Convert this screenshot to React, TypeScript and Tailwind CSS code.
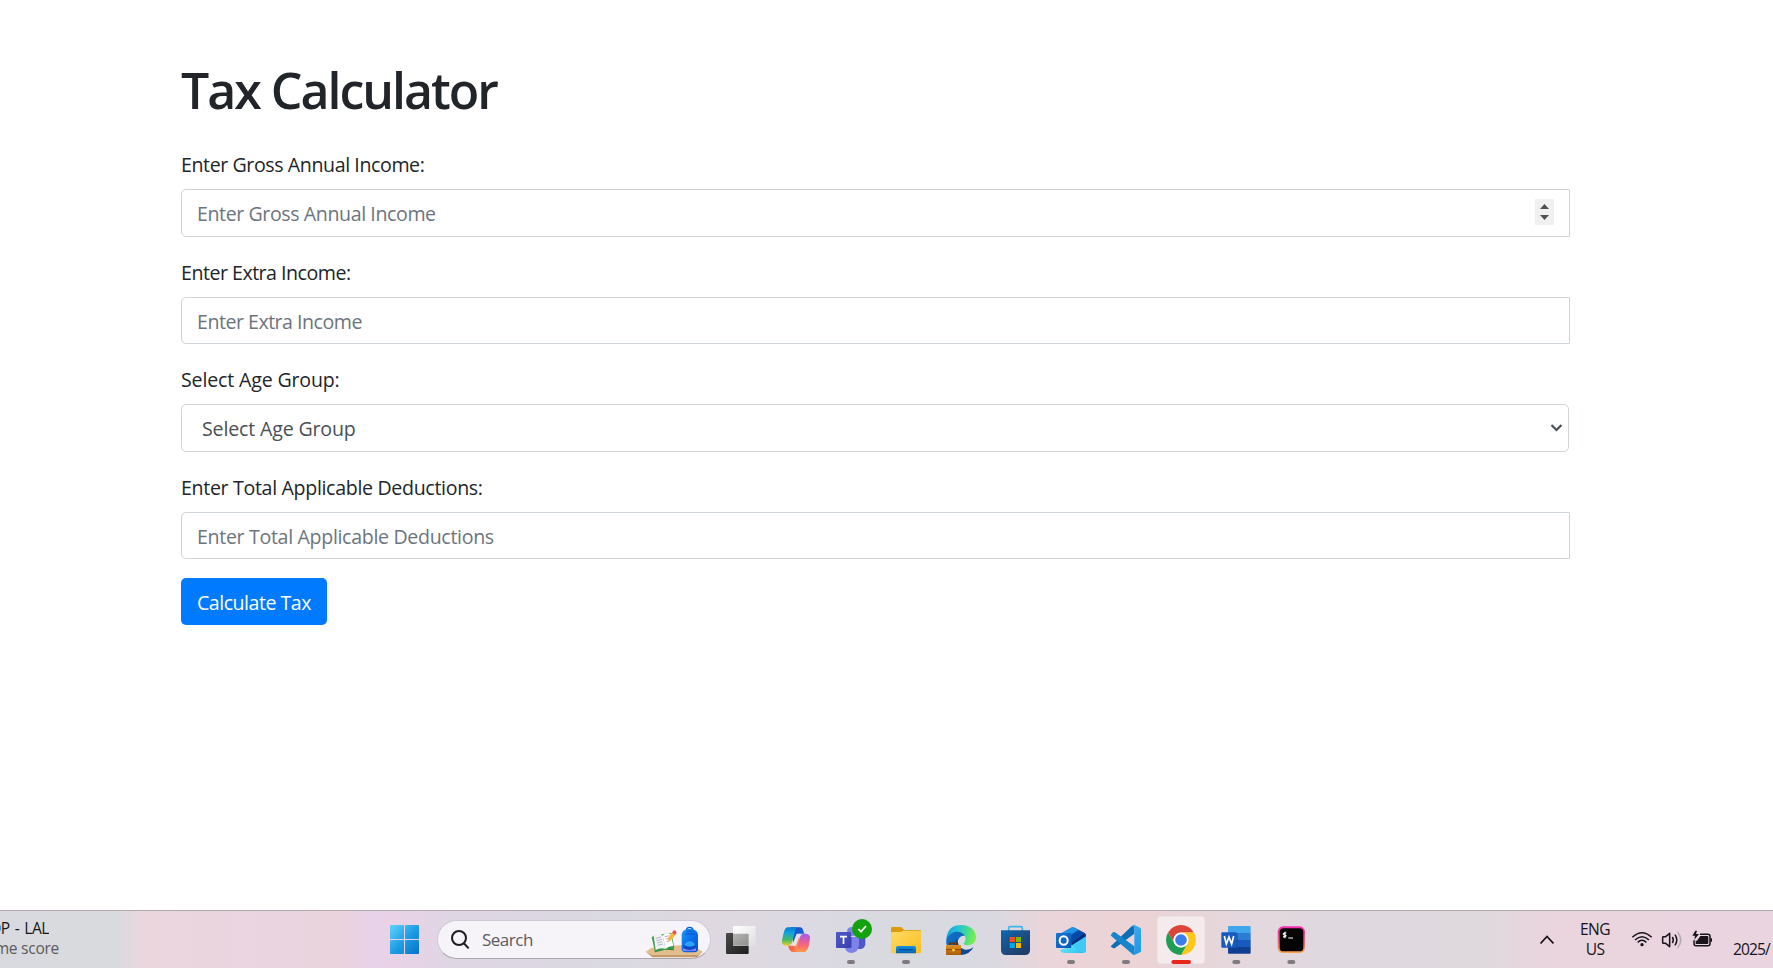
import React from "react";

type TextProps = { children: React.ReactNode; className?: string };

function Label({ children, className = "" }: TextProps) {
  return (
    <label className={`block h-[30px] w-max text-[19.6px] leading-[30px] text-[#212529] ${className}`}>
      {children}
    </label>
  );
}

type FieldProps = {
  label: string;
  placeholder: string;
  labelClass: string;
  inputClass: string;
  spinner?: boolean;
};

function NumberField({ label, placeholder, labelClass, inputClass, spinner }: FieldProps) {
  return (
    <div>
      <Label className={labelClass}>{label}</Label>
      <div className="mt-[9px] flex h-[47.5px] w-[1389px] items-center rounded-l-[5px] border border-[#ced4da] bg-white pl-[15px] pr-[15px]">
        <input
          type="text"
          placeholder={placeholder}
          className={`h-full min-w-0 flex-1 bg-transparent pt-[2px] text-[19.6px] text-[#495057] outline-none placeholder:text-[#6c757d] ${inputClass}`}
        />
        {spinner && (
          <svg className="mb-[1px]" width="19" height="26" viewBox="0 0 19 26">
            <rect width="19" height="26" fill="#f0f0f0" />
            <path d="M5 10 9.5 5 14 10ZM5 16h9l-4.500 5Z" fill="#505050" />
          </svg>
        )}
      </div>
    </div>
  );
}

function Cell({ box, children }: { box: string; children: React.ReactNode }) {
  return (
    <svg className="shrink-0" width="55" height="57" viewBox={box}>
      {children}
    </svg>
  );
}

function Grad({ id, stops, x2 = 1, y2 = 1 }: { id: string; stops: string[]; x2?: number; y2?: number }) {
  return (
    <linearGradient id={id} x1="0" y1="0" x2={x2} y2={y2}>
      {stops.map((c, i) => (
        <stop key={i} offset={i / (stops.length - 1)} stopColor={c} />
      ))}
    </linearGradient>
  );
}

function StartIcon() {
  return (
    <svg className="shrink-0" width="29" height="29" viewBox="0 0 87 87">
      <defs>
        <linearGradient id="win" gradientUnits="userSpaceOnUse" x1="0" y1="0" x2="87" y2="87">
          <stop offset="0" stopColor="#5fd3fb" />
          <stop offset=".5" stopColor="#1f9fe4" />
          <stop offset="1" stopColor="#0672cc" />
        </linearGradient>
      </defs>
      <g fill="url(#win)">
        <rect width="42" height="42" rx="2" />
        <rect x="45" width="42" height="42" rx="2" />
        <rect y="45" width="42" height="42" rx="2" />
        <rect x="45" y="45" width="42" height="42" rx="2" />
      </g>
    </svg>
  );
}

function SearchArt() {
  return (
    <svg className="shrink-0" width="58" height="36" viewBox="826 65 174 108">
      <defs>
        <Grad id="bag" stops={["#1b9bf5", "#0a6fee", "#0653c8"]} />
      </defs>
      <path d="M828 154 845 143 890 137 950 134 990 148 999 154 985 163H843Z" fill="#e3bd8c" />
      <path d="M828 154 845 163H985L999 154 982 171H848Z" fill="#c79a68" />
      <path d="M846 113 856 156 886 148 914 150 909 141 854 148Z" fill="#2f8b3b" />
      <path d="M846 111 851 107 874 103 884 101 905 98 914 143 886 147 856 153Z" fill="#3b9c49" />
      <path d="M852 107Q866 99 879 106L888 146Q871 140 858 149Z" fill="#f4f2f7" />
      <path d="M879 106Q889 95 903 101L911 137Q896 137 888 146Z" fill="#fff" />
      <path d="M858 114 874 110M860 121 877 117M862 128 878 124M864 135 880 131M885 109 900 106M888 116 901 113M890 124 903 121" stroke="#aaa4bd" strokeWidth="2.500" />
      <path d="M893 125 896 112 907 97 916 105 904 119Z" fill="#f9b233" />
      <path d="M893 125 895 116 901 121Z" fill="#e9cba3" />
      <path d="M907 97 912 90Q919 89 921 97L916 105Z" fill="#ef5350" />
      <path d="M950 91Q950 81 960 81T970 91" fill="none" stroke="#0a5bd0" strokeWidth="4" />
      <path d="M936 103Q937 86 960 85 983 86 985 103V147Q984 156 974 156H947Q936 155 936 147Z" fill="url(#bag)" />
      <path d="M945 101H976M951 93H969" stroke="#0754c2" strokeWidth="3" />
      <path d="M941 141Q941 121 960 121T978 141V150H941Z" fill="#0a49c9" />
      <path d="M943 134Q948 122 960 122T977 134Q960 145 943 134Z" fill="#2aa1fa" />
      <path d="M940 144Q960 154 979 144V151H940Z" fill="#a78bfa" />
    </svg>
  );
}

const Indicator = ({ x }: { x: number }) => <rect x={x} y="180" width="24" height="12" rx="6" fill="#7f7b80" />;

function TaskIcons() {
  return (
    <div className="flex h-[57px]">
      <Cell box="39 33 165 171">
        <defs>
          <Grad id="tv1" stops={["#4b4b4a", "#1d1d1d"]} />
          <Grad id="tv2" stops={["#ffffff", "#dedede"]} />
          <Grad id="tv3" stops={["#b5b5b5", "#8f8f8d"]} />
        </defs>
        <rect x="78" y="99" width="68" height="63" rx="3" fill="url(#tv1)" />
        <rect x="99" y="78" width="68" height="60" rx="3" fill="url(#tv2)" />
        <path d="M99 101H144Q146 101 146 103V137H102Q99 137 99 134Z" fill="url(#tv3)" />
      </Cell>

      <Cell box="204 33 165 171">
        <defs>
          <Grad id="cp1" x2={0} stops={["#0d7bd9", "#12a6d8", "#45b86b", "#e8cf20"]} />
          <Grad id="cp2" x2={0} stops={["#a45cf0", "#d55bb5", "#fa6a72", "#ff9a4a"]} />
          <Grad id="cp3" stops={["#1a49c8", "#1673dc"]} />
          <Grad id="cp4" x2={1} y2={0} stops={["#f8553c", "#ff9b5c"]} />
        </defs>
        <path d="M273 82H300Q308 83 310 93L313 101H301Q292 101 288 112L280 128 274 100Z" fill="url(#cp3)" />
        <path d="M301 156H280Q270 156 267 145L264 137H276Q284 136 288 124L296 107 302 132Z" fill="url(#cp4)" />
        <path d="M276 137 290 101H300L288 137Z" fill="#e8e4ee" />
        <path d="M262 82H292Q287 84 285 94L276 127Q272 137 262 137 249 138 246 128 245 121 251 99 255 83 262 82Z" fill="url(#cp1)" />
        <path d="M314 156H284Q290 153 292 144L300 111Q304 101 314 101 327 100 330 110 331 117 326 139 321 155 314 156Z" fill="url(#cp2)" />
      </Cell>

      <Cell box="369 33 165 171">
        <defs>
          <Grad id="tm" stops={["#5059c9", "#3940ab"]} />
        </defs>
        <circle cx="482" cy="100" r="11" fill="#5059c9" />
        <path d="M462 111H496V133Q494 147 480 147 466 147 462 137Z" fill="#4e57c5" />
        <circle cx="455" cy="95" r="14" fill="#7b83eb" />
        <path d="M434 111H477V136Q475 158 455 159 436 157 434 140Z" fill="#7b83eb" />
        <path d="M434 111H456V143H434Z" fill="#5a62c4" />
        <rect x="408" y="96" width="45" height="48" rx="3" fill="url(#tm)" />
        <path d="M420 110H441M430.500 110V132" stroke="#fff" strokeWidth="5" />
        <circle cx="486" cy="87" r="30" fill="#13a10e" />
        <path d="M475 87 483 95 498 78" fill="none" stroke="#fff" strokeWidth="5" />
        <Indicator x={441} />
      </Cell>

      <Cell box="534 33 165 171">
        <defs>
          <Grad id="fe" stops={["#ffdb66", "#f9bd20"]} />
          <Grad id="fb" x2={0} stops={["#1490df", "#0a62b5"]} />
        </defs>
        <path d="M573 84Q573 81 577 81H602Q606 81 609 86L612 90H660Q663 90 663 94V110H573Z" fill="#dd9a0b" />
        <path d="M573 99Q574 96 579 96H602L611 92H660Q663 92 663 96V156Q663 160 659 160H577Q573 160 573 156Z" fill="url(#fe)" />
        <path d="M588 144Q588 138 594 138H642Q648 138 648 144V160H588Z" fill="url(#fb)" />
        <rect x="597" y="147" width="42" height="4" rx="2" fill="#064b92" />
        <Indicator x={606} />
      </Cell>

      <Cell box="9 33 165 171">
        <defs>
          <Grad id="ed" x2={1} y2={0.2} stops={["#168fd5", "#22bde0", "#39d5a0", "#75ed50"]} />
          <Grad id="eb" stops={["#1173c8", "#0a5aaf"]} />
          <Grad id="es" stops={["#0c59a4", "#123f8c"]} />
          <Grad id="br" x2={0} stops={["#e29223", "#a95b09"]} />
        </defs>
        <path d="M49 132Q46 102 69 92 95 84 110 109 91 102 84 121 79 143 103 155 73 170 49 132Z" fill="url(#eb)" />
        <path d="M83 113Q80 143 105 149 119 151 131 141 119 163 94 165 70 160 71 137 73 120 83 113Z" fill="url(#es)" />
        <path d="M49 115Q54 75 94 75 134 77 138 110 138 131 119 135 105 137 101 131 113 119 101 103 76 81 49 115Z" fill="url(#ed)" />
        <path d="M59 136V130H80V136" fill="none" stroke="#713500" strokeWidth="5" />
        <rect x="48" y="135" width="45" height="30" rx="2" fill="url(#br)" />
        <path d="M48 149H93" stroke="#8c4608" strokeWidth="3" />
        <rect x="67" y="146" width="7" height="8" rx="2" fill="#ffd344" />
      </Cell>

      <Cell box="174 33 165 171">
        <defs>
          <Grad id="st" x2={0.8} stops={["#0c68b0", "#1c4f85", "#213b66"]} />
        </defs>
        <path d="M236 94V83Q236 80 239 80H273Q277 80 277 84V94" fill="none" stroke="#39b8ee" strokeWidth="5" />
        <path d="M213 91H300V150Q300 165 285 165H228Q213 165 213 150Z" fill="url(#st)" />
        <path d="M239 111H255V126H239Z" fill="#f25022" />
        <path d="M258 111H273V126H258Z" fill="#7fba00" />
        <path d="M239 129H255V144H239Z" fill="#00a4ef" />
        <path d="M258 129H273V144H258Z" fill="#ffb900" />
      </Cell>

      <Cell box="339 33 165 171">
        <defs>
          <Grad id="ol" stops={["#22b6ee", "#57dff9", "#25b9ef"]} />
          <Grad id="ob" stops={["#1476d4", "#0a55b3"]} />
        </defs>
        <path d="M390 102 423 83Q429 80 435 83L464 99Q468 102 468 108V135H390Z" fill="#1272c8" />
        <path d="M394 100 427 81 444 90 400 117Z" fill="#1d94e5" />
        <path d="M410 115 446 91 463 99 424 128Z" fill="#0a48a7" />
        <path d="M424 128 463 99Q468 102 468 107L426 138Z" fill="#082f80" />
        <path d="M468 110V151Q467 159 459 159H401Q392 158 390 150L418 141Z" fill="url(#ol)" />
        <path d="M426 136 468 110V151Q467 158 460 159Z" fill="#3ecaf5" />
        <rect x="378" y="99" width="46" height="45" rx="3" fill="url(#ob)" />
        <ellipse cx="401" cy="121.500" rx="12" ry="13" fill="none" stroke="#fff" strokeWidth="6" />
        <Indicator x={411} />
      </Cell>

      <Cell box="504 33 165 171">
        <defs>
          <Grad id="vs" x2={0} stops={["#35a9ef", "#2196e8"]} />
        </defs>
        <path d="M543 138 605 79 613 75V101L555 144Q551 146 549 144L543 140Q542 139 543 138Z" fill="#0c6fb5" />
        <path d="M543 104 549 97Q551 95 555 97L613 139V165L606 161 543 107Q542 105 543 104Z" fill="#1585cc" />
        <path d="M605 79Q610 74 615 76L630 83Q633 85 633 88V152Q633 155 630 157L615 164Q610 166 606 161 613 161 613 154V85Q612 79 605 79Z" fill="url(#vs)" />
        <Indicator x={576} />
      </Cell>

      <Cell box="39 33 165 171">
        <rect x="51" y="48" width="144" height="144" rx="11" fill="#f5ebed" stroke="#e4d7db" strokeWidth="2" />
        <circle cx="123" cy="120" r="45" fill="#fff" />
        <path d="M84.030 97.500A45 45 0 0 1 161.970 97.500H123A22.500 22.500 0 0 0 103.500 131.250Z" fill="#db4437" />
        <path d="M161.970 97.500A45 45 0 0 1 123 165L142.500 131.250A22.500 22.500 0 0 0 123 97.500Z" fill="#ffc61a" />
        <path d="M123 165A45 45 0 0 1 84.030 97.500L103.500 131.250A22.500 22.500 0 0 0 142.500 131.250Z" fill="#1f9d55" />
        <circle cx="123" cy="120" r="22" fill="#fff" />
        <circle cx="123" cy="120" r="17.500" fill="#3b7ded" />
        <rect x="94" y="180" width="59" height="12" rx="6" fill="#e8261c" />
      </Cell>

      <Cell box="204 33 165 171">
        <path d="M267 78H329Q332 78 332 81V99H264V81Q264 78 267 78Z" fill="#41a5ee" />
        <path d="M264 99H332V120H264Z" fill="#2b7cd3" />
        <path d="M264 120H332V141H264Z" fill="#185abd" />
        <path d="M264 141H332V158Q332 161 329 161H267Q264 161 264 158Z" fill="#103f91" />
        <rect x="264" y="99" width="30" height="49" fill="#123f84" opacity=".35" />
        <rect x="244" y="97" width="46" height="46" rx="3" fill="#185abd" />
        <path d="M253 108 259 132 267 111 275 132 281 108" fill="none" stroke="#fff" strokeWidth="5" />
        <Indicator x={277} />
      </Cell>

      <Cell box="369 33 165 171">
        <defs>
          <Grad id="tt" x2={0} stops={["#f52db1", "#f0567f", "#f8a64d"]} />
        </defs>
        <rect x="413" y="79" width="82" height="80" rx="16" fill="url(#tt)" />
        <rect x="419" y="85" width="71" height="69" rx="11" fill="#050505" />
        <path d="M439 99Q429 99 430 103 433 106 438 107 437 112 429 110M435 95V115M445 114H459" fill="none" stroke="#fff" strokeWidth="3.500" />
        <Indicator x={442} />
      </Cell>
    </div>
  );
}

function Tray() {
  return (
    <div className="ml-[204px] flex h-full w-[251px] shrink-0 text-[#17151a]">
      <svg className="mt-[15px] shrink-0" width="32" height="30" viewBox="0 0 32 30" fill="none" stroke="currentColor" strokeWidth="1.800">
        <path d="M18.500 17.500 25 10.500 31.500 17.500" />
      </svg>
      <div className="ml-[22px] mt-[8px] w-[38px] shrink-0 text-center text-[15.600px] leading-[20px] tracking-[-0.6px]">
        <div>ENG</div>
        <div>US</div>
      </div>
      <svg className="ml-[15px] mt-[15px] shrink-0" width="90" height="30" viewBox="390 78 270 90" fill="none" stroke="currentColor" strokeWidth="4.500">
        <path d="M400 112Q429 84 458 112M408 120Q429 100 450 120M416 127Q429 115 442 127" />
        <circle cx="429" cy="134" r="5" fill="currentColor" stroke="none" />
        <path d="M491 112Q491 110 493 110H500L512 100V140L500 130H493Q491 130 491 128Z" strokeLinejoin="round" />
        <path d="M520 111Q526 120 520 129M528 104Q539 120 528 136" />
        <path d="M536 97Q555 120 536 143" stroke="#b9a9b1" />
        <path d="M603 103H627Q633 103 633 109V131Q633 137 627 137H591Q585 137 585 131V121" />
        <path d="M604 108H625Q628 108 628 111V129Q628 132 625 132H590V122H594Z" fill="currentColor" stroke="none" />
        <path d="M634 115H639V125H634Z" fill="currentColor" stroke="none" />
        <path d="M589 92 580 107H588L586 119 600 102H591L594 92Z" fill="currentColor" stroke="none" />
      </svg>
      <div className="ml-[14px] mt-[28px] w-[40px] shrink-0 whitespace-nowrap text-[15.600px] leading-[20px] tracking-[-0.9px]">2025/</div>
    </div>
  );
}

export default function App() {
  return (
    <div className="flex h-[968px] w-[1773px] flex-col overflow-hidden bg-white font-['Open_Sans','Noto_Sans',sans-serif]">
      <main className="flex-1 pl-[181px]">
        <h1 className="mt-[60px] h-[60px] w-max text-[50px] font-semibold leading-[60px] tracking-[-2px] text-[#212529]">
          Tax Calculator
        </h1>
        <form className="mt-[30px] flex flex-col gap-[21px]">
          <NumberField
            label="Enter Gross Annual Income:"
            placeholder="Enter Gross Annual Income"
            labelClass="tracking-[-0.41px]"
            inputClass="tracking-[-0.41px]"
            spinner
          />
          <NumberField
            label="Enter Extra Income:"
            placeholder="Enter Extra Income"
            labelClass="tracking-[-0.5px]"
            inputClass="tracking-[-0.5px]"
          />
          <div>
            <Label className="tracking-[-0.17px]">Select Age Group:</Label>
            <div className="mt-[9px] flex h-[47.5px] w-[1388px] items-center justify-between rounded-[5px] border border-[#ced4da] pl-[20px] pr-[5px]">
              <span className="pt-[1px] text-[19.600px] tracking-[-0.17px] text-[#495057]">Select Age Group</span>
              <svg className="mt-[1px]" width="13" height="10" viewBox="0 0 13 10" fill="none" stroke="#495057" strokeWidth="2.200">
                <path d="M1.500 2 6.500 7 11.500 2" />
              </svg>
            </div>
          </div>
          <NumberField
            label="Enter Total Applicable Deductions:"
            placeholder="Enter Total Applicable Deductions"
            labelClass="tracking-[-0.33px]"
            inputClass="tracking-[-0.33px]"
          />
        </form>
        <button className="mt-[19px] flex h-[47px] w-[146px] items-center justify-center whitespace-nowrap rounded-[5px] bg-[#007bff] pt-[2px] text-[19.600px] tracking-[-0.5px] text-white">
          Calculate Tax
        </button>
      </main>

      <footer className="flex h-[58px] shrink-0 border-t border-[#b3a9af] bg-[linear-gradient(90deg,#d8dadf_0px,#d9dade_115px,#ebd6de_145px,#e9d4e0_280px,#ead3dc_340px,#e8d2ea_375px,#e9d2e6_395px,#dfd6e4_450px,#dad9e1_620px,#dfd8e0_715px,#dcd9e2_800px,#d8dae0_900px,#dad9e1_990px,#ead5da_1050px,#ecd3d5_1140px,#e3d8de_1250px,#dfd8df_1340px,#dfd9de_1480px,#ead4de_1550px,#ead4df_1773px)]">
        <div className="flex h-full w-[390px] shrink-0 flex-col pt-[7px] text-[15.600px] leading-[20px]">
          <div className="flex w-[49px] justify-end overflow-hidden whitespace-nowrap tracking-[-0.5px] [word-spacing:1.5px] text-[#17171a]">OP - LAL</div>
          <div className="flex w-[59px] justify-end overflow-hidden whitespace-nowrap tracking-[-0.3px] text-[#5b5a60]">me score</div>
        </div>
        <div className="flex items-center">
          <StartIcon />
        </div>
        <div className="ml-[18px] mt-[9px] flex h-[39px] w-[274px] shrink-0 items-center rounded-full border border-[#d0cad6] border-b-[#aaa5ae] bg-[#f6f4f8] pl-[13px]">
          <svg width="19" height="20" viewBox="243 92 57 60" fill="none" stroke="#1d1c20" strokeWidth="6">
            <circle cx="267" cy="116" r="21" />
            <path d="M281 131 296 147" />
          </svg>
          <span className="ml-[12px] w-[163px] text-[17px] tracking-[-0.5px] text-[#5c5b60]">Search</span>
          <SearchArt />
        </div>
        <div className="ml-[2px]">
          <TaskIcons />
        </div>
        <Tray />
      </footer>
    </div>
  );
}
